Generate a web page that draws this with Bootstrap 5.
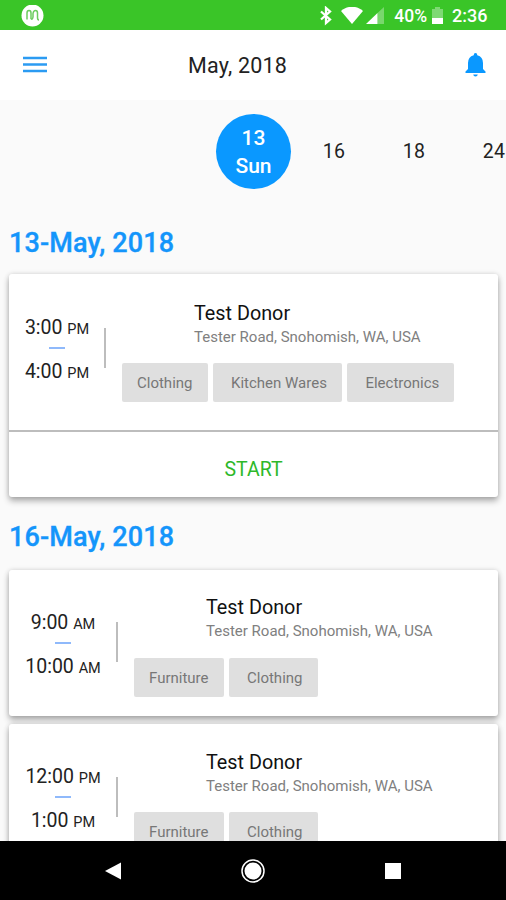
<!DOCTYPE html>
<html lang="en">
<head>
<meta charset="utf-8">
<meta name="viewport" content="width=device-width, initial-scale=1">
<title>Schedule</title>
<link href="https://cdn.jsdelivr.net/npm/bootstrap@5.3.0/dist/css/bootstrap.min.css" rel="stylesheet">
<style>
body{font-family:Roboto,"Liberation Sans",sans-serif;background:#fafafa;color:#222;font-size:20px;line-height:1}
.phone{width:506px;height:900px}
svg{display:block;flex:none}
.statusbar{height:30px;background:#3ac528;font-weight:500;font-size:17.5px;padding:2px 18.5px 0 21px}
.statusbar .wifi{margin-left:8px}
.statusbar .signal{margin-left:3px}
.statusbar .level{margin:2px 5px 0 10px}
.statusbar .clock{margin-left:9px;font-size:18px}
.topbar{height:70px;padding:0 19px 0 23px}
.topbar h1{font-size:21.5px;font-weight:400;letter-spacing:.2px;margin:0 auto 0 141px;padding-top:1px}
.days{height:103px;padding-left:216px;gap:0}
.day{width:80px;flex:none;font-size:19.5px;letter-spacing:.2px;padding-top:1px}
.day.current{width:75px;height:75px;margin-right:3px;background:#0a98ff;color:#fff;font-size:21px;font-weight:500;line-height:28px;letter-spacing:0}
.day-title{font-size:27px;font-weight:500;-webkit-text-stroke:.35px #1495fb;letter-spacing:.15px;color:#1495fb;margin:0;padding-left:9px;height:71px;line-height:80px}
.day-title.second{height:64px;line-height:63px}
.visit{margin:0 8px 8.5px 9px;border-radius:3px;box-shadow:0 4px 6px rgba(0,0,0,.3),0 0 5px rgba(0,0,0,.13)}
.visit-body{padding:0 0 0 16px;height:146px}
.visit-body.tall{height:156px}
.times{width:76px;padding-top:43px}
.times.narrow{width:64px;padding-top:44px}
.times div{height:20px;line-height:20px;font-size:19.5px;white-space:nowrap}
.times small{font-size:14.5px}
.times i{width:16px;height:2px;background:#8fb9fb;margin:9px 0 13px}
.rule{width:1.5px;height:40px;background:#bdbdbd;margin:52.5px 16.5px 0 15px}
.tall .rule{margin-top:53.5px}
.info{padding-top:26.5px}
.tall .info{padding-top:27.5px}
.who{padding-left:72px}
.who h2{font-size:19.8px;font-weight:400;margin:0;line-height:24px;color:#111}
.who p{font-size:15px;line-height:22px;margin:0;color:#808080;white-space:nowrap}
.tags{gap:5px;padding-top:15.5px}
.chip{height:39px;line-height:40px;background:#dfdfdf;color:#777;font-size:15px;border-radius:2px;padding:0 15px;white-space:nowrap}
.chip.wide{padding-left:18.5px}
.start{height:67px;border:0;border-top:2px solid #bdbdbd;background:none;color:#2eb82a;font-size:19.5px;padding-top:11px}
.navkeys{height:59px;background:#000}
</style>
<script src="https://cdn.jsdelivr.net/npm/bootstrap@5.3.0/dist/js/bootstrap.bundle.min.js"></script>
</head>
<body class="overflow-hidden">
<div class="phone d-flex flex-column overflow-hidden">
  <div class="statusbar d-flex align-items-center text-white flex-shrink-0">
    <svg width="23" height="23" viewBox="0 0 23 23"><circle cx="11.5" cy="10.500" r="11" fill="#fff"/><path d="M6 14.500V8Q6 5.500 8 5.500T10 8V14M10 14Q11.500 15 12 12V8.500Q12.500 5.500 14.500 5.500T16.500 8V12.500Q16.500 15 18 15" fill="none" stroke="#6ccc5e" stroke-width="1.500"/></svg>
    <svg class="ms-auto" width="14" height="20" viewBox="0 0 14 20"><path d="M2 5.500 11 13.500 7 17V2l4 3.500-9 8" fill="none" stroke="#fff" stroke-width="2.300"/></svg>
    <svg class="wifi" width="22" height="18" viewBox="0 0 22 18"><path d="M0 4C6-1.700 16-1.700 22 4L11 17Z" fill="#fff"/></svg>
    <svg class="signal" width="18" height="18" viewBox="0 0 18 18"><path d="M18 0V17H11.500V6Z" fill="#fff" opacity=".32"/><path d="M11.500 6V17H0Z" fill="#fff"/></svg>
    <span class="level">40%</span>
    <svg width="11" height="18" viewBox="0 0 11 18"><path d="M0 2H3V0H8V2H11V11H0Z" fill="#fff" opacity=".35"/><path d="M0 11H11V17H0Z" fill="#fff"/></svg>
    <span class="clock">2:36</span>
  </div>
  <header class="topbar d-flex align-items-center bg-white flex-shrink-0">
    <svg width="24" height="18" viewBox="0 0 24 18"><path d="M0 2H24M0 8.500H24M0 15H24" stroke="#2b9bf2" stroke-width="2.500"/></svg>
    <h1>May, 2018</h1>
    <svg width="24" height="24" viewBox="0 0 24 24"><path d="M12.500 0q1.800 0 1.800 2.300Q20 4 20 10v6l2.500 2.500V20h-20v-1.500L5 16V10Q5 4 10.700 2.300 10.700 0 12.500 0ZM10.200 21.500h4.600Q14.500 23.500 12.500 23.500t-2.300-2Z" fill="#0a98ff"/></svg>
  </header>
  <main class="flex-grow-1 overflow-hidden">
    <div class="days d-flex align-items-center overflow-hidden">
      <div class="day current rounded-circle d-flex flex-column align-items-center justify-content-center"><span>13</span><span>Sun</span></div>
      <div class="day text-center">16</div>
      <div class="day text-center">18</div>
      <div class="day text-center">24</div>
    </div>
    <h2 class="day-title">13-May, 2018</h2>
    <section class="visit bg-white">
      <div class="visit-body tall d-flex">
        <div class="times narrow d-flex flex-column align-items-center"><div>3:00 <small>PM</small></div><i></i><div>4:00 <small>PM</small></div></div>
        <div class="rule"></div>
        <div class="info">
          <div class="who"><h2>Test Donor</h2><p>Tester Road, Snohomish, WA, USA</p></div>
          <div class="tags d-flex"><span class="chip">Clothing</span><span class="chip wide">Kitchen Wares</span><span class="chip wide">Electronics</span></div>
        </div>
      </div>
      <button class="start w-100 d-block">START</button>
    </section>
    <h2 class="day-title second">16-May, 2018</h2>
    <section class="visit bg-white">
      <div class="visit-body d-flex">
        <div class="times d-flex flex-column align-items-center"><div>9:00 <small>AM</small></div><i></i><div>10:00 <small>AM</small></div></div>
        <div class="rule"></div>
        <div class="info">
          <div class="who"><h2>Test Donor</h2><p>Tester Road, Snohomish, WA, USA</p></div>
          <div class="tags d-flex"><span class="chip">Furniture</span><span class="chip wide">Clothing</span></div>
        </div>
      </div>
    </section>
    <section class="visit bg-white">
      <div class="visit-body d-flex">
        <div class="times d-flex flex-column align-items-center"><div>12:00 <small>PM</small></div><i></i><div>1:00 <small>PM</small></div></div>
        <div class="rule"></div>
        <div class="info">
          <div class="who"><h2>Test Donor</h2><p>Tester Road, Snohomish, WA, USA</p></div>
          <div class="tags d-flex"><span class="chip">Furniture</span><span class="chip wide">Clothing</span></div>
        </div>
      </div>
    </section>
  </main>
  <nav class="navkeys d-flex align-items-center justify-content-center flex-shrink-0">
    <svg width="296" height="26" viewBox="0 0 296 26"><path d="M0 13 16 4.500V21.500Z" fill="#fff"/><circle cx="148" cy="13" r="11" fill="none" stroke="#fff" stroke-width="1.500"/><circle cx="148" cy="13" r="8.500" fill="#fff"/><rect x="280" y="5" width="16" height="16" fill="#fff"/></svg>
  </nav>
</div>
</body>
</html>
